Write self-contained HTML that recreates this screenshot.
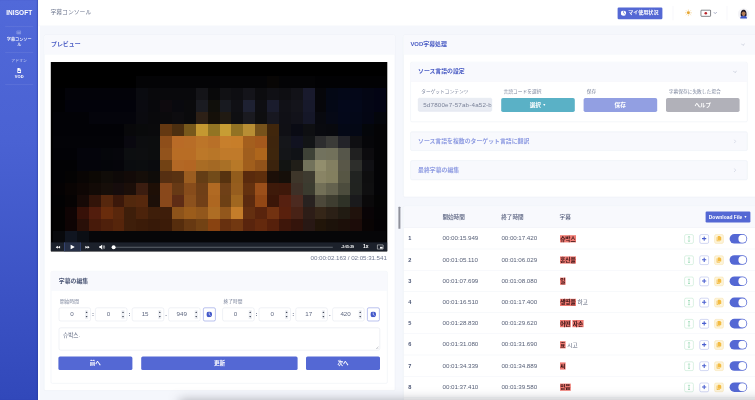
<!DOCTYPE html>
<html lang="ja">
<head>
<meta charset="utf-8">
<title>字幕コンソール</title>
<style>
*{box-sizing:border-box;margin:0;padding:0}
html,body{width:755px;height:400px;overflow:hidden;background:#f5f7fc}
body{font-family:"Liberation Sans","Noto Sans CJK JP",sans-serif;color:#4b5675}
#root{-webkit-mask-image:linear-gradient(#000,#000);mask-image:linear-gradient(#000,#000);position:absolute;left:0;top:0;width:1887.5px;height:1000px;transform:scale(.4);transform-origin:0 0;overflow:hidden;background:#f5f7fc}
.abs{position:absolute}
/* sidebar */
#side{position:absolute;left:0;top:0;width:95px;box-shadow:inset -3px 0 3px -1px rgba(35,50,140,.45),5px 0 0 #fff;height:1000px;background:linear-gradient(180deg,#5169d9 0%,#4a62d3 35%,#3b52c4 75%,#3148ba 100%);color:#fff;text-align:center}
#side .logo{position:absolute;left:0;width:96px;top:21.5px;font-weight:700;font-size:16.2px;letter-spacing:.2px;line-height:20px}
#side .sep{position:absolute;left:13px;width:70px;height:1px;background:rgba(255,255,255,.18)}
#side .t1{position:absolute;left:0;width:96px;top:94px;font-size:10.3px;font-weight:500;line-height:11.2px}
#side .t2{position:absolute;left:0;width:96px;top:145px;font-size:9.8px;line-height:14px;color:rgba(255,255,255,.62)}
#side .t3{position:absolute;left:0;width:96px;top:183.7px;font-size:10px;font-weight:700;line-height:14px}
/* topbar */
#top{position:absolute;left:96px;top:0;right:0;height:64px;background:#fff;box-shadow:0 1px 2px rgba(60,70,120,.06)}
#top .title{position:absolute;left:30px;top:21px;font-size:14.6px;line-height:21px;color:#6f7890}
#top .use{position:absolute;left:1448px;top:18.5px;width:112px;height:29px;background:#5468d4;border-radius:3px;color:#fff;font-size:12.6px;font-weight:700;line-height:27.4px;text-align:left;padding-left:26.5px;white-space:nowrap}
#top .vs{position:absolute;top:15px;width:1px;height:36px;background:#e9ecf3}
/* cards */
.card{position:absolute;background:#fff;border:1px solid #e7eaf3;border-radius:4px}
.card>.hd{position:absolute;left:0;top:0;right:0;background:#f8f9fd;border-bottom:1px solid #eceff6;border-radius:4px 4px 0 0}
.hd .tt{position:absolute;white-space:nowrap;font-weight:700}
.blue{color:#4a5cc4}
.lblue{color:#8f9ce2}
.lbl{position:absolute;font-size:11.8px;line-height:14px;color:#7c859c;white-space:nowrap}
.inp{position:absolute;height:34px;border:1px solid #d9dde9;border-radius:5px;background:#fff;font-size:15.6px;letter-spacing:-.1px;line-height:32px;color:#5f6880;text-align:center}
.inp i{position:absolute;right:9px;top:8px;width:7px;height:17px}
.sepc{position:absolute;font-size:15px;font-weight:700;color:#4b5675;line-height:34px;width:12px;text-align:center}
.clk{position:absolute;width:31px;height:34px;border:1.4px solid #5468d4;border-radius:4px;background:#fff}
.btn{position:absolute;border-radius:3px;color:#fff;text-align:center;font-weight:700;white-space:nowrap}
.pri{background:#5468d4}
svg{display:block}
.pix{position:absolute;left:0;top:0}
/* table */
.th{position:absolute;top:19px;font-size:14px;font-weight:500;color:#5a6380;line-height:14px;white-space:nowrap}
.row{position:absolute;left:0;right:0;height:53px;border-top:1px solid #eceff6}
.row span{position:absolute;top:18.6px;font-size:15.6px;letter-spacing:-.16px;line-height:16px;color:#586178;white-space:nowrap}
.row .n{top:18.4px;left:12px;font-weight:700;color:#4b5675;font-size:14px}
.row .s{left:98px}
.row .e{left:245px}
.row .k{left:391px;font-family:"Liberation Sans","Noto Sans CJK KR","NanumGothic",sans-serif;font-size:14px;letter-spacing:0;color:#5a6278;top:19.6px}
.row .k b{background:#ef7a72;color:#2e1012;font-weight:700;padding:.9px 1px}
.ic{position:absolute;top:16px;width:23px;height:23px;border-radius:4px;background:#fff}
.tg{position:absolute;left:1824px;top:15.4px;width:44px;height:23.6px;border-radius:12px;background:#5468d4}
.tg:after{content:"";position:absolute;right:2.2px;top:2px;width:19.6px;height:19.6px;border-radius:10px;background:#fff}
</style>
</head>
<body>
<div id="root">
<div id="side">
<div class="logo">INISOFT</div>
<div class="sep" style="top:65.500px"></div>
<svg class="abs" style="left:40.500px;top:76px" width="12" height="10" viewBox="0 0 12 10"><rect x=".6" y=".6" width="10.800" height="8.800" rx="1.200" fill="rgba(255,255,255,.14)" stroke="rgba(255,255,255,.5)" stroke-width="1.200"/><rect x="2.600" y="5.600" width="6.800" height="1.400" fill="rgba(255,255,255,.5)"/></svg>
<div class="t1">字幕コンソー<br>ル</div>
<div class="sep" style="top:129.500px"></div>
<div class="t2">アドオン</div>
<svg class="abs" style="left:43px;top:169.5px" width="10" height="13" viewBox="0 0 10 13"><path d="M1.5 0h4.8L10 3.7V11.5A1.5 1.5 0 0 1 8.5 13h-7A1.5 1.5 0 0 1 0 11.500V1.5A1.5 1.5 0 0 1 1.5 0z" fill="#fff"/><path d="M6 .4V4h3.6z" fill="#4c64d5"/><rect x="2.2" y="6.6" width="5.6" height="3.6" rx=".6" fill="#4c64d5"/></svg>
<div class="t3">VOD</div>
<div class="sep" style="top:211px"></div>
</div>
<div id="top">
<div class="title">字幕コンソール</div>
<div class="use"><svg class="abs" style="left:8px;top:7.800px" width="13.400" height="13.400" viewBox="0 0 13 13"><circle cx="6.500" cy="6.500" r="6.500" fill="#fff"/><path d="M6.800 6.300V0M6.800 6.300L11.800 10" stroke="#5468d4" stroke-width="1.500" fill="none"/></svg>マイ使用状況</div>
<div class="vs" style="left:1585.5px"></div>
<svg class="abs" style="left:1616px;top:23px" width="18" height="18" viewBox="0 0 18 18"><circle cx="9" cy="9" r="3.700" fill="#e6a632"/><g stroke="#f0c068" stroke-width="1.400" stroke-linecap="round"><path d="M9 1.500v1.800M9 14.700v1.800M1.500 9h1.800M14.700 9h1.800M3.700 3.700l1.300 1.300M13 13l1.300 1.300M3.700 14.300l1.300-1.300M13 5l1.300-1.300"/></g></svg>
<svg class="abs" style="left:1655px;top:23.500px" width="27" height="18" viewBox="0 0 27 18"><rect x="1.100" y="1.100" width="24.800" height="15.800" rx="2" fill="#fff" stroke="#4c4e55" stroke-width="2.200"/><circle cx="13.500" cy="9" r="3.200" fill="#b9242a"/></svg>
<svg class="abs" style="left:1687px;top:29px" width="10" height="7" viewBox="0 0 10 7"><path d="M1 1l4 4.200L9 1" fill="none" stroke="#8e95b5" stroke-width="1.800"/></svg>
<div class="vs" style="left:1721px"></div>
<svg class="abs" style="left:1748px;top:20px" width="30" height="30" viewBox="0 0 30 30"><circle cx="15" cy="15" r="14.500" fill="#f4f4f7"/><path d="M8 20c-1.500-9 1.500-15.500 7-15.500S23.500 11 22 20z" fill="#241c28"/><ellipse cx="15" cy="13" rx="4.700" ry="5.500" fill="#b37c56"/><path d="M10 11c.8-3.800 3-4.500 5-4.500s4.200.7 5 4.500c-2-.4-3.500-1.500-4.400-2.800C14.500 9.800 12.500 10.700 10 11z" fill="#241c28"/><path d="M6.500 26.500c0-5.500 3-8 8.500-8s8.500 2.500 8.500 8z" fill="#3d56c4"/><path d="M12.800 17.500h4.400v2l-2.200 1.600-2.200-1.600z" fill="#b37c56"/></svg>
</div>
<div class="card" style="left:110px;top:86.500px;width:877.500px;height:890.500px">
<div class="hd" style="height:48.500px"><div class="tt blue" style="left:16.500px;top:13.500px;font-size:14.800px;line-height:21px">プレビュー</div></div>
<div class="abs" style="left:15.500px;top:67.500px;width:841.800px;height:472.800px;background:#000;overflow:hidden"><svg class="pix" width="842.5" height="475" viewBox="0 0 842.5 475" shape-rendering="crispEdges">
<rect width="842.5" height="475" fill="#000"/>
<rect x="213.9" y="36.0" width="208.2" height="30.0" fill="#040406"/>
<rect x="421.8" y="36.0" width="119.1" height="30.0" fill="#040406"/>
<rect x="540.6" y="36.0" width="30.0" height="30.0" fill="#080605"/>
<rect x="570.3" y="36.0" width="89.4" height="30.0" fill="#040406"/>
<rect x="659.4" y="36.0" width="178.5" height="30.0" fill="#020204"/>
<rect x="6.0" y="65.7" width="30.0" height="30.0" fill="#000002"/>
<rect x="35.7" y="65.7" width="178.5" height="30.0" fill="#030309"/>
<rect x="213.9" y="65.7" width="30.0" height="30.0" fill="#0a0b10"/>
<rect x="243.6" y="65.7" width="119.1" height="30.0" fill="#09090c"/>
<rect x="362.4" y="65.7" width="30.0" height="30.0" fill="#141418"/>
<rect x="392.1" y="65.7" width="30.0" height="30.0" fill="#09090a"/>
<rect x="421.8" y="65.7" width="30.0" height="30.0" fill="#111114"/>
<rect x="451.5" y="65.7" width="30.0" height="30.0" fill="#0e0e12"/>
<rect x="481.2" y="65.7" width="30.0" height="30.0" fill="#14141a"/>
<rect x="510.9" y="65.7" width="30.0" height="30.0" fill="#0c0c0f"/>
<rect x="540.6" y="65.7" width="30.0" height="30.0" fill="#101015"/>
<rect x="570.3" y="65.7" width="30.0" height="30.0" fill="#0e0e12"/>
<rect x="600.0" y="65.7" width="30.0" height="30.0" fill="#121218"/>
<rect x="629.7" y="65.7" width="30.0" height="30.0" fill="#191a2d"/>
<rect x="659.4" y="65.7" width="30.0" height="30.0" fill="#06060a"/>
<rect x="689.1" y="65.7" width="30.0" height="30.0" fill="#040815"/>
<rect x="718.8" y="65.7" width="30.0" height="30.0" fill="#040818"/>
<rect x="748.5" y="65.7" width="30.0" height="30.0" fill="#040718"/>
<rect x="778.2" y="65.7" width="30.0" height="30.0" fill="#040614"/>
<rect x="807.9" y="65.7" width="30.0" height="30.0" fill="#030414"/>
<rect x="6.0" y="95.3" width="30.0" height="30.0" fill="#010103"/>
<rect x="35.7" y="95.3" width="178.5" height="30.0" fill="#02020a"/>
<rect x="213.9" y="95.3" width="30.0" height="30.0" fill="#0a0a10"/>
<rect x="243.6" y="95.3" width="30.0" height="30.0" fill="#08080c"/>
<rect x="273.3" y="95.3" width="30.0" height="30.0" fill="#0e0a0e"/>
<rect x="303.0" y="95.3" width="30.0" height="30.0" fill="#09090e"/>
<rect x="332.7" y="95.3" width="30.0" height="30.0" fill="#0a0a0c"/>
<rect x="362.4" y="95.3" width="30.0" height="30.0" fill="#1a1b21"/>
<rect x="392.1" y="95.3" width="30.0" height="30.0" fill="#100f0b"/>
<rect x="421.8" y="95.3" width="30.0" height="30.0" fill="#181a20"/>
<rect x="451.5" y="95.3" width="30.0" height="30.0" fill="#101015"/>
<rect x="481.2" y="95.3" width="30.0" height="30.0" fill="#1e2132"/>
<rect x="510.9" y="95.3" width="30.0" height="30.0" fill="#0e0e12"/>
<rect x="540.6" y="95.3" width="30.0" height="30.0" fill="#1a1c2d"/>
<rect x="570.3" y="95.3" width="30.0" height="30.0" fill="#111117"/>
<rect x="600.0" y="95.3" width="30.0" height="30.0" fill="#14141b"/>
<rect x="629.7" y="95.3" width="30.0" height="30.0" fill="#17192b"/>
<rect x="659.4" y="95.3" width="30.0" height="30.0" fill="#06060a"/>
<rect x="689.1" y="95.3" width="30.0" height="30.0" fill="#040816"/>
<rect x="718.8" y="95.3" width="30.0" height="30.0" fill="#04081b"/>
<rect x="748.5" y="95.3" width="30.0" height="30.0" fill="#04081a"/>
<rect x="778.2" y="95.3" width="30.0" height="30.0" fill="#040615"/>
<rect x="807.9" y="95.3" width="30.0" height="30.0" fill="#030414"/>
<rect x="6.0" y="125.0" width="89.4" height="30.0" fill="#020206"/>
<rect x="95.1" y="125.0" width="119.1" height="30.0" fill="#04040b"/>
<rect x="213.9" y="125.0" width="30.0" height="30.0" fill="#0a0a0f"/>
<rect x="243.6" y="125.0" width="30.0" height="30.0" fill="#09090c"/>
<rect x="273.3" y="125.0" width="30.0" height="30.0" fill="#0b0a0c"/>
<rect x="303.0" y="125.0" width="30.0" height="30.0" fill="#0d0c0f"/>
<rect x="332.7" y="125.0" width="30.0" height="30.0" fill="#0a0a0c"/>
<rect x="362.4" y="125.0" width="30.0" height="30.0" fill="#2d2016"/>
<rect x="392.1" y="125.0" width="30.0" height="30.0" fill="#151009"/>
<rect x="421.8" y="125.0" width="30.0" height="30.0" fill="#201a12"/>
<rect x="451.5" y="125.0" width="30.0" height="30.0" fill="#0f0f12"/>
<rect x="481.2" y="125.0" width="30.0" height="30.0" fill="#1a1a20"/>
<rect x="510.9" y="125.0" width="30.0" height="30.0" fill="#0e0e10"/>
<rect x="540.6" y="125.0" width="30.0" height="30.0" fill="#171720"/>
<rect x="570.3" y="125.0" width="30.0" height="30.0" fill="#101016"/>
<rect x="600.0" y="125.0" width="30.0" height="30.0" fill="#12121a"/>
<rect x="629.7" y="125.0" width="30.0" height="30.0" fill="#151728"/>
<rect x="659.4" y="125.0" width="30.0" height="30.0" fill="#08090f"/>
<rect x="689.1" y="125.0" width="30.0" height="30.0" fill="#060916"/>
<rect x="718.8" y="125.0" width="30.0" height="30.0" fill="#04081a"/>
<rect x="748.5" y="125.0" width="30.0" height="30.0" fill="#040818"/>
<rect x="778.2" y="125.0" width="30.0" height="30.0" fill="#040614"/>
<rect x="807.9" y="125.0" width="30.0" height="30.0" fill="#04060c"/>
<rect x="6.0" y="154.8" width="178.5" height="30.0" fill="#020206"/>
<rect x="184.2" y="154.8" width="30.0" height="30.0" fill="#08080a"/>
<rect x="213.9" y="154.8" width="30.0" height="30.0" fill="#090a0b"/>
<rect x="243.6" y="154.8" width="30.0" height="30.0" fill="#0a0a0c"/>
<rect x="273.3" y="154.8" width="30.0" height="30.0" fill="#643811"/>
<rect x="303.0" y="154.8" width="30.0" height="30.0" fill="#4c2f10"/>
<rect x="332.7" y="154.8" width="30.0" height="30.0" fill="#77581b"/>
<rect x="362.4" y="154.8" width="30.0" height="30.0" fill="#c49831"/>
<rect x="392.1" y="154.8" width="30.0" height="30.0" fill="#927423"/>
<rect x="421.8" y="154.8" width="30.0" height="30.0" fill="#c79d34"/>
<rect x="451.5" y="154.8" width="30.0" height="30.0" fill="#927223"/>
<rect x="481.2" y="154.8" width="30.0" height="30.0" fill="#b88e34"/>
<rect x="510.9" y="154.8" width="30.0" height="30.0" fill="#76521b"/>
<rect x="540.6" y="154.8" width="30.0" height="30.0" fill="#40260c"/>
<rect x="570.3" y="154.8" width="30.0" height="30.0" fill="#101015"/>
<rect x="600.0" y="154.8" width="30.0" height="30.0" fill="#0a0b14"/>
<rect x="629.7" y="154.8" width="30.0" height="30.0" fill="#0e0f12"/>
<rect x="659.4" y="154.8" width="30.0" height="30.0" fill="#090a0f"/>
<rect x="689.1" y="154.8" width="30.0" height="30.0" fill="#08090e"/>
<rect x="718.8" y="154.8" width="30.0" height="30.0" fill="#040816"/>
<rect x="748.5" y="154.8" width="30.0" height="30.0" fill="#040815"/>
<rect x="778.2" y="154.8" width="30.0" height="30.0" fill="#04060a"/>
<rect x="807.9" y="154.8" width="30.0" height="30.0" fill="#040406"/>
<rect x="6.0" y="184.4" width="178.5" height="30.0" fill="#030307"/>
<rect x="184.2" y="184.4" width="30.0" height="30.0" fill="#09080f"/>
<rect x="213.9" y="184.4" width="30.0" height="30.0" fill="#0c0d0f"/>
<rect x="243.6" y="184.4" width="30.0" height="30.0" fill="#0c0d0e"/>
<rect x="273.3" y="184.4" width="30.0" height="30.0" fill="#8e4e1a"/>
<rect x="303.0" y="184.4" width="30.0" height="30.0" fill="#b96b27"/>
<rect x="332.7" y="184.4" width="30.0" height="30.0" fill="#b86d27"/>
<rect x="362.4" y="184.4" width="30.0" height="30.0" fill="#bc7529"/>
<rect x="392.1" y="184.4" width="30.0" height="30.0" fill="#b87028"/>
<rect x="421.8" y="184.4" width="30.0" height="30.0" fill="#c77f2c"/>
<rect x="451.5" y="184.4" width="30.0" height="30.0" fill="#c77e2a"/>
<rect x="481.2" y="184.4" width="30.0" height="30.0" fill="#a45f1e"/>
<rect x="510.9" y="184.4" width="30.0" height="30.0" fill="#a4591d"/>
<rect x="540.6" y="184.4" width="30.0" height="30.0" fill="#3e250d"/>
<rect x="570.3" y="184.4" width="30.0" height="30.0" fill="#15161a"/>
<rect x="600.0" y="184.4" width="30.0" height="30.0" fill="#111220"/>
<rect x="629.7" y="184.4" width="30.0" height="30.0" fill="#121416"/>
<rect x="659.4" y="184.4" width="30.0" height="30.0" fill="#2d2d2e"/>
<rect x="689.1" y="184.4" width="30.0" height="30.0" fill="#3b3b38"/>
<rect x="718.8" y="184.4" width="30.0" height="30.0" fill="#232329"/>
<rect x="748.5" y="184.4" width="30.0" height="30.0" fill="#0f0f12"/>
<rect x="778.2" y="184.4" width="30.0" height="30.0" fill="#060609"/>
<rect x="807.9" y="184.4" width="30.0" height="30.0" fill="#040406"/>
<rect x="6.0" y="214.2" width="59.7" height="30.0" fill="#020206"/>
<rect x="65.4" y="214.2" width="59.7" height="30.0" fill="#04040b"/>
<rect x="124.8" y="214.2" width="30.0" height="30.0" fill="#05060a"/>
<rect x="154.5" y="214.2" width="30.0" height="30.0" fill="#06060b"/>
<rect x="184.2" y="214.2" width="30.0" height="30.0" fill="#0c0e10"/>
<rect x="213.9" y="214.2" width="30.0" height="30.0" fill="#0d0e10"/>
<rect x="243.6" y="214.2" width="30.0" height="30.0" fill="#0c0d0e"/>
<rect x="273.3" y="214.2" width="30.0" height="30.0" fill="#92531c"/>
<rect x="303.0" y="214.2" width="59.7" height="30.0" fill="#b86d25"/>
<rect x="362.4" y="214.2" width="30.0" height="30.0" fill="#bc7829"/>
<rect x="392.1" y="214.2" width="30.0" height="30.0" fill="#b87628"/>
<rect x="421.8" y="214.2" width="59.7" height="30.0" fill="#c07a2a"/>
<rect x="481.2" y="214.2" width="30.0" height="30.0" fill="#a05e1e"/>
<rect x="510.9" y="214.2" width="30.0" height="30.0" fill="#ae661c"/>
<rect x="540.6" y="214.2" width="30.0" height="30.0" fill="#3e260d"/>
<rect x="570.3" y="214.2" width="30.0" height="30.0" fill="#141518"/>
<rect x="600.0" y="214.2" width="30.0" height="30.0" fill="#101216"/>
<rect x="629.7" y="214.2" width="30.0" height="30.0" fill="#3e4237"/>
<rect x="659.4" y="214.2" width="30.0" height="30.0" fill="#72725e"/>
<rect x="689.1" y="214.2" width="30.0" height="30.0" fill="#72715b"/>
<rect x="718.8" y="214.2" width="30.0" height="30.0" fill="#56564a"/>
<rect x="748.5" y="214.2" width="30.0" height="30.0" fill="#202020"/>
<rect x="778.2" y="214.2" width="30.0" height="30.0" fill="#0c0b0e"/>
<rect x="807.9" y="214.2" width="30.0" height="30.0" fill="#040406"/>
<rect x="6.0" y="243.8" width="59.7" height="30.0" fill="#020204"/>
<rect x="65.4" y="243.8" width="59.7" height="30.0" fill="#04040a"/>
<rect x="124.8" y="243.8" width="30.0" height="30.0" fill="#040509"/>
<rect x="154.5" y="243.8" width="30.0" height="30.0" fill="#05050a"/>
<rect x="184.2" y="243.8" width="30.0" height="30.0" fill="#0a0c0f"/>
<rect x="213.9" y="243.8" width="30.0" height="30.0" fill="#0b0d0f"/>
<rect x="243.6" y="243.8" width="30.0" height="30.0" fill="#0a0b0e"/>
<rect x="273.3" y="243.8" width="30.0" height="30.0" fill="#724214"/>
<rect x="303.0" y="243.8" width="30.0" height="30.0" fill="#b36825"/>
<rect x="332.7" y="243.8" width="30.0" height="30.0" fill="#b36623"/>
<rect x="362.4" y="243.8" width="30.0" height="30.0" fill="#a96c24"/>
<rect x="392.1" y="243.8" width="30.0" height="30.0" fill="#a46924"/>
<rect x="421.8" y="243.8" width="30.0" height="30.0" fill="#a97026"/>
<rect x="451.5" y="243.8" width="30.0" height="30.0" fill="#b87928"/>
<rect x="481.2" y="243.8" width="30.0" height="30.0" fill="#a05e1c"/>
<rect x="510.9" y="243.8" width="30.0" height="30.0" fill="#92531a"/>
<rect x="540.6" y="243.8" width="30.0" height="30.0" fill="#3b230d"/>
<rect x="570.3" y="243.8" width="30.0" height="30.0" fill="#121412"/>
<rect x="600.0" y="243.8" width="30.0" height="30.0" fill="#201e18"/>
<rect x="629.7" y="243.8" width="30.0" height="30.0" fill="#72725b"/>
<rect x="659.4" y="243.8" width="30.0" height="30.0" fill="#928e6d"/>
<rect x="689.1" y="243.8" width="30.0" height="30.0" fill="#837f61"/>
<rect x="718.8" y="243.8" width="30.0" height="30.0" fill="#595748"/>
<rect x="748.5" y="243.8" width="30.0" height="30.0" fill="#2d2e2b"/>
<rect x="778.2" y="243.8" width="30.0" height="30.0" fill="#101014"/>
<rect x="807.9" y="243.8" width="30.0" height="30.0" fill="#040406"/>
<rect x="6.0" y="273.6" width="30.0" height="30.0" fill="#020204"/>
<rect x="35.7" y="273.6" width="30.0" height="30.0" fill="#040303"/>
<rect x="65.4" y="273.6" width="30.0" height="30.0" fill="#090504"/>
<rect x="95.1" y="273.6" width="30.0" height="30.0" fill="#0c0804"/>
<rect x="124.8" y="273.6" width="30.0" height="30.0" fill="#100c08"/>
<rect x="154.5" y="273.6" width="30.0" height="30.0" fill="#0e0908"/>
<rect x="184.2" y="273.6" width="30.0" height="30.0" fill="#120a08"/>
<rect x="213.9" y="273.6" width="30.0" height="30.0" fill="#150e09"/>
<rect x="243.6" y="273.6" width="30.0" height="30.0" fill="#0f0c09"/>
<rect x="273.3" y="273.6" width="30.0" height="30.0" fill="#562f12"/>
<rect x="303.0" y="273.6" width="30.0" height="30.0" fill="#593212"/>
<rect x="332.7" y="273.6" width="30.0" height="30.0" fill="#9b5d20"/>
<rect x="362.4" y="273.6" width="30.0" height="30.0" fill="#643d15"/>
<rect x="392.1" y="273.6" width="30.0" height="30.0" fill="#724b19"/>
<rect x="421.8" y="273.6" width="30.0" height="30.0" fill="#56320f"/>
<rect x="451.5" y="273.6" width="30.0" height="30.0" fill="#925c1c"/>
<rect x="481.2" y="273.6" width="30.0" height="30.0" fill="#592a0d"/>
<rect x="510.9" y="273.6" width="30.0" height="30.0" fill="#5e2e0c"/>
<rect x="540.6" y="273.6" width="30.0" height="30.0" fill="#1c0f08"/>
<rect x="570.3" y="273.6" width="30.0" height="30.0" fill="#150f09"/>
<rect x="600.0" y="273.6" width="30.0" height="30.0" fill="#3e362a"/>
<rect x="629.7" y="273.6" width="30.0" height="30.0" fill="#3e3b30"/>
<rect x="659.4" y="273.6" width="30.0" height="30.0" fill="#898465"/>
<rect x="689.1" y="273.6" width="30.0" height="30.0" fill="#837f5f"/>
<rect x="718.8" y="273.6" width="30.0" height="30.0" fill="#575644"/>
<rect x="748.5" y="273.6" width="30.0" height="30.0" fill="#212321"/>
<rect x="778.2" y="273.6" width="30.0" height="30.0" fill="#0e0e0f"/>
<rect x="807.9" y="273.6" width="30.0" height="30.0" fill="#040406"/>
<rect x="6.0" y="303.2" width="30.0" height="30.0" fill="#040203"/>
<rect x="35.7" y="303.2" width="30.0" height="30.0" fill="#090403"/>
<rect x="65.4" y="303.2" width="30.0" height="30.0" fill="#0e0604"/>
<rect x="95.1" y="303.2" width="30.0" height="30.0" fill="#120a06"/>
<rect x="124.8" y="303.2" width="30.0" height="30.0" fill="#160e09"/>
<rect x="154.5" y="303.2" width="30.0" height="30.0" fill="#160c0c"/>
<rect x="184.2" y="303.2" width="30.0" height="30.0" fill="#1b0e09"/>
<rect x="213.9" y="303.2" width="30.0" height="30.0" fill="#3b1d10"/>
<rect x="243.6" y="303.2" width="30.0" height="30.0" fill="#1e0f06"/>
<rect x="273.3" y="303.2" width="30.0" height="30.0" fill="#89481b"/>
<rect x="303.0" y="303.2" width="30.0" height="30.0" fill="#673915"/>
<rect x="332.7" y="303.2" width="30.0" height="30.0" fill="#874c1b"/>
<rect x="362.4" y="303.2" width="30.0" height="30.0" fill="#6f3f17"/>
<rect x="392.1" y="303.2" width="30.0" height="30.0" fill="#b16a23"/>
<rect x="421.8" y="303.2" width="30.0" height="30.0" fill="#6f4017"/>
<rect x="451.5" y="303.2" width="30.0" height="30.0" fill="#965d1e"/>
<rect x="481.2" y="303.2" width="30.0" height="30.0" fill="#64310f"/>
<rect x="510.9" y="303.2" width="30.0" height="30.0" fill="#9b4f1a"/>
<rect x="540.6" y="303.2" width="30.0" height="30.0" fill="#3e1a0a"/>
<rect x="570.3" y="303.2" width="30.0" height="30.0" fill="#3e180a"/>
<rect x="600.0" y="303.2" width="30.0" height="30.0" fill="#3e3027"/>
<rect x="629.7" y="303.2" width="30.0" height="30.0" fill="#3b3b2f"/>
<rect x="659.4" y="303.2" width="30.0" height="30.0" fill="#726f57"/>
<rect x="689.1" y="303.2" width="30.0" height="30.0" fill="#64624e"/>
<rect x="718.8" y="303.2" width="30.0" height="30.0" fill="#4c4c3d"/>
<rect x="748.5" y="303.2" width="30.0" height="30.0" fill="#212320"/>
<rect x="778.2" y="303.2" width="30.0" height="30.0" fill="#0f0f10"/>
<rect x="807.9" y="303.2" width="30.0" height="30.0" fill="#040406"/>
<rect x="6.0" y="332.9" width="30.0" height="30.0" fill="#020203"/>
<rect x="35.7" y="332.9" width="30.0" height="30.0" fill="#060303"/>
<rect x="65.4" y="332.9" width="30.0" height="30.0" fill="#160906"/>
<rect x="95.1" y="332.9" width="30.0" height="30.0" fill="#321409"/>
<rect x="124.8" y="332.9" width="30.0" height="30.0" fill="#56270d"/>
<rect x="154.5" y="332.9" width="30.0" height="30.0" fill="#3b180a"/>
<rect x="184.2" y="332.9" width="30.0" height="30.0" fill="#52280d"/>
<rect x="213.9" y="332.9" width="30.0" height="30.0" fill="#56280d"/>
<rect x="243.6" y="332.9" width="30.0" height="30.0" fill="#1c0f08"/>
<rect x="273.3" y="332.9" width="30.0" height="30.0" fill="#89481b"/>
<rect x="303.0" y="332.9" width="30.0" height="30.0" fill="#5e2c15"/>
<rect x="332.7" y="332.9" width="30.0" height="30.0" fill="#8c511d"/>
<rect x="362.4" y="332.9" width="30.0" height="30.0" fill="#713f17"/>
<rect x="392.1" y="332.9" width="30.0" height="30.0" fill="#ae6721"/>
<rect x="421.8" y="332.9" width="30.0" height="30.0" fill="#6d4015"/>
<rect x="451.5" y="332.9" width="30.0" height="30.0" fill="#a06720"/>
<rect x="481.2" y="332.9" width="30.0" height="30.0" fill="#5b2a0f"/>
<rect x="510.9" y="332.9" width="30.0" height="30.0" fill="#924715"/>
<rect x="540.6" y="332.9" width="30.0" height="30.0" fill="#3b1608"/>
<rect x="570.3" y="332.9" width="30.0" height="30.0" fill="#562010"/>
<rect x="600.0" y="332.9" width="30.0" height="30.0" fill="#4c2a20"/>
<rect x="629.7" y="332.9" width="30.0" height="30.0" fill="#282220"/>
<rect x="659.4" y="332.9" width="30.0" height="30.0" fill="#4c483a"/>
<rect x="689.1" y="332.9" width="30.0" height="30.0" fill="#3e3d30"/>
<rect x="718.8" y="332.9" width="30.0" height="30.0" fill="#2f3227"/>
<rect x="748.5" y="332.9" width="30.0" height="30.0" fill="#1a1a1c"/>
<rect x="778.2" y="332.9" width="30.0" height="30.0" fill="#0a090a"/>
<rect x="807.9" y="332.9" width="30.0" height="30.0" fill="#040404"/>
<rect x="6.0" y="362.6" width="30.0" height="30.0" fill="#030202"/>
<rect x="35.7" y="362.6" width="30.0" height="30.0" fill="#0f0404"/>
<rect x="65.4" y="362.6" width="30.0" height="30.0" fill="#371108"/>
<rect x="95.1" y="362.6" width="30.0" height="30.0" fill="#521d0d"/>
<rect x="124.8" y="362.6" width="30.0" height="30.0" fill="#692c0c"/>
<rect x="154.5" y="362.6" width="30.0" height="30.0" fill="#59270c"/>
<rect x="184.2" y="362.6" width="30.0" height="30.0" fill="#3e1e0a"/>
<rect x="213.9" y="362.6" width="30.0" height="30.0" fill="#4c230b"/>
<rect x="243.6" y="362.6" width="30.0" height="30.0" fill="#3e1e0a"/>
<rect x="273.3" y="362.6" width="30.0" height="30.0" fill="#3e1d0a"/>
<rect x="303.0" y="362.6" width="30.0" height="30.0" fill="#8d531a"/>
<rect x="332.7" y="362.6" width="30.0" height="30.0" fill="#9b5c1b"/>
<rect x="362.4" y="362.6" width="30.0" height="30.0" fill="#92571c"/>
<rect x="392.1" y="362.6" width="30.0" height="30.0" fill="#ae6d24"/>
<rect x="421.8" y="362.6" width="30.0" height="30.0" fill="#92571c"/>
<rect x="451.5" y="362.6" width="30.0" height="30.0" fill="#c47d2a"/>
<rect x="481.2" y="362.6" width="30.0" height="30.0" fill="#642f10"/>
<rect x="510.9" y="362.6" width="30.0" height="30.0" fill="#59240d"/>
<rect x="540.6" y="362.6" width="30.0" height="30.0" fill="#723211"/>
<rect x="570.3" y="362.6" width="30.0" height="30.0" fill="#59200d"/>
<rect x="600.0" y="362.6" width="30.0" height="30.0" fill="#482216"/>
<rect x="629.7" y="362.6" width="30.0" height="30.0" fill="#2d1d17"/>
<rect x="659.4" y="362.6" width="30.0" height="30.0" fill="#352618"/>
<rect x="689.1" y="362.6" width="30.0" height="30.0" fill="#2b2016"/>
<rect x="718.8" y="362.6" width="30.0" height="30.0" fill="#211b12"/>
<rect x="748.5" y="362.6" width="30.0" height="30.0" fill="#20120c"/>
<rect x="778.2" y="362.6" width="30.0" height="30.0" fill="#090406"/>
<rect x="807.9" y="362.6" width="30.0" height="30.0" fill="#040304"/>
<rect x="6.0" y="392.3" width="30.0" height="30.0" fill="#030202"/>
<rect x="35.7" y="392.3" width="30.0" height="30.0" fill="#0e0404"/>
<rect x="65.4" y="392.3" width="30.0" height="30.0" fill="#290f08"/>
<rect x="95.1" y="392.3" width="30.0" height="30.0" fill="#471a0a"/>
<rect x="124.8" y="392.3" width="30.0" height="30.0" fill="#4f200b"/>
<rect x="154.5" y="392.3" width="30.0" height="30.0" fill="#56250b"/>
<rect x="184.2" y="392.3" width="30.0" height="30.0" fill="#3e1e0a"/>
<rect x="213.9" y="392.3" width="30.0" height="30.0" fill="#3b1b08"/>
<rect x="243.6" y="392.3" width="30.0" height="30.0" fill="#371908"/>
<rect x="273.3" y="392.3" width="30.0" height="30.0" fill="#3b1b08"/>
<rect x="303.0" y="392.3" width="30.0" height="30.0" fill="#562d0d"/>
<rect x="332.7" y="392.3" width="30.0" height="30.0" fill="#673912"/>
<rect x="362.4" y="392.3" width="30.0" height="30.0" fill="#724214"/>
<rect x="392.1" y="392.3" width="30.0" height="30.0" fill="#894311"/>
<rect x="421.8" y="392.3" width="30.0" height="30.0" fill="#67300f"/>
<rect x="451.5" y="392.3" width="30.0" height="30.0" fill="#723811"/>
<rect x="481.2" y="392.3" width="30.0" height="30.0" fill="#59240d"/>
<rect x="510.9" y="392.3" width="30.0" height="30.0" fill="#64290d"/>
<rect x="540.6" y="392.3" width="30.0" height="30.0" fill="#56200b"/>
<rect x="570.3" y="392.3" width="30.0" height="30.0" fill="#3e160a"/>
<rect x="600.0" y="392.3" width="30.0" height="30.0" fill="#34140b"/>
<rect x="629.7" y="392.3" width="30.0" height="30.0" fill="#281814"/>
<rect x="659.4" y="392.3" width="30.0" height="30.0" fill="#211509"/>
<rect x="689.1" y="392.3" width="30.0" height="30.0" fill="#1c120a"/>
<rect x="718.8" y="392.3" width="30.0" height="30.0" fill="#1c0f09"/>
<rect x="748.5" y="392.3" width="30.0" height="30.0" fill="#1c0c09"/>
<rect x="778.2" y="392.3" width="30.0" height="30.0" fill="#090404"/>
<rect x="807.9" y="392.3" width="30.0" height="30.0" fill="#040204"/>
<rect x="6.0" y="422.1" width="30.0" height="30.0" fill="#08090c"/>
<rect x="35.7" y="422.1" width="30.0" height="30.0" fill="#101520"/>
<rect x="65.4" y="422.1" width="30.0" height="30.0" fill="#0b0e14"/>
<rect x="95.1" y="422.1" width="30.0" height="30.0" fill="#060609"/>
<rect x="124.8" y="422.1" width="713.1" height="30.0" fill="#060608"/>
</svg>
<div class="abs" style="left:0;top:451px;width:842.5px;height:25px;background:#1c212b"></div>
<div class="abs" style="left:33px;top:451px;width:41px;height:25px;background:#262f46;border-left:1.500px solid #4a63ae;border-right:1.500px solid #4a63ae"></div>
<svg class="abs" style="left:12.500px;top:458.600px" width="11.500" height="8.500" viewBox="0 0 14 10"><path d="M7 .5v9L0 5zM14 .5v9L7 5z" fill="#fff"/></svg>
<svg class="abs" style="left:49px;top:456.200px" width="11" height="13" viewBox="0 0 11 13"><path d="M0 0l11 6.500L0 13z" fill="#fff"/></svg>
<svg class="abs" style="left:86px;top:458.600px" width="11.500" height="8.500" viewBox="0 0 14 10"><path d="M0 .5v9L7 5zM7 .5v9L14 5z" fill="#fff"/></svg>
<svg class="abs" style="left:121px;top:456.200px" width="16" height="13.500" viewBox="0 0 19 16"><path d="M0 5h4l5-4.500v15L4 11H0z" fill="#fff"/><path d="M11.500 4.500a4.500 4.500 0 0 1 0 7M13.500 2a8 8 0 0 1 0 12" fill="none" stroke="#fff" stroke-width="1.600"/></svg>
<div class="abs" style="left:157px;top:461.700px;width:548px;height:2px;background:#6d727b"></div>
<div class="abs" style="left:152px;top:457.700px;width:10px;height:10px;border-radius:5px;background:#fff"></div>
<div class="abs" style="left:726px;top:456px;font-size:8.600px;font-weight:700;line-height:12px;color:#fff;white-space:nowrap">-2:05:29</div>
<div class="abs" style="left:781px;top:454.500px;font-size:12.500px;font-weight:700;line-height:15px;color:#fff;white-space:nowrap">1x</div>
<svg class="abs" style="left:815px;top:455.500px" width="17" height="13" viewBox="0 0 17 13"><rect x=".9" y=".9" width="15.200" height="11.200" rx="1" fill="none" stroke="#fff" stroke-width="1.800"/><rect x="8" y="6" width="6.500" height="4.500" fill="#fff"/></svg></div>
<div class="abs" style="right:19.500px;top:547px;font-size:15.6px;letter-spacing:-.17px;line-height:20px;color:#6f7890;white-space:nowrap">00:00:02.163 / 02:05:31.541</div>
<div class="card" style="left:16px;top:590.500px;width:842px;height:281px">
<div class="hd" style="height:47.500px"><div class="tt" style="left:19px;top:13.500px;font-size:14.7px;line-height:20px;color:#4b5675">字幕の編集</div></div>
<div class="lbl" style="left:22px;top:67.5px">開始時間</div>
<div class="lbl" style="left:431px;top:67.5px">終了時間</div>
<div class="inp" style="left:18.5px;top:90px;width:80px"><span class="abs" style="left:0;width:64.6px;text-align:center">0</span><svg class="abs" style="right:5px;top:4.500px" width="9" height="23" viewBox="0 0 9 23"><rect width="9" height="23" rx="2.500" fill="#eef0f4"/><path d="M2 7.800l2.500-3.800L7 7.800zM2 15.200l2.500 3.800L7 15.200z" fill="#3c4252"/></svg></div>
<div class="inp" style="left:110px;top:90px;width:80px"><span class="abs" style="left:0;width:64.6px;text-align:center">0</span><svg class="abs" style="right:5px;top:4.500px" width="9" height="23" viewBox="0 0 9 23"><rect width="9" height="23" rx="2.500" fill="#eef0f4"/><path d="M2 7.800l2.500-3.800L7 7.800zM2 15.200l2.500 3.800L7 15.200z" fill="#3c4252"/></svg></div>
<div class="inp" style="left:201.5px;top:90px;width:80px"><span class="abs" style="left:0;width:64.6px;text-align:center">15</span><svg class="abs" style="right:5px;top:4.500px" width="9" height="23" viewBox="0 0 9 23"><rect width="9" height="23" rx="2.500" fill="#eef0f4"/><path d="M2 7.800l2.500-3.800L7 7.800zM2 15.200l2.500 3.800L7 15.200z" fill="#3c4252"/></svg></div>
<div class="inp" style="left:293px;top:90px;width:80px"><span class="abs" style="left:0;width:64.6px;text-align:center">949</span><svg class="abs" style="right:5px;top:4.500px" width="9" height="23" viewBox="0 0 9 23"><rect width="9" height="23" rx="2.500" fill="#eef0f4"/><path d="M2 7.800l2.500-3.800L7 7.800zM2 15.200l2.500 3.800L7 15.200z" fill="#3c4252"/></svg></div>
<div class="sepc" style="left:98.5px;top:90px">:</div>
<div class="sepc" style="left:190px;top:90px">:</div>
<div class="sepc" style="left:281.5px;top:90px">.</div>
<div class="clk" style="left:380px;top:90px"><svg class="abs" style="left:7.300px;top:8.800px" width="14" height="14" viewBox="0 0 13 13"><circle cx="6.500" cy="6.500" r="6.500" fill="#4257c9"/><path d="M6.500 3v3.800l2.400 1.500" fill="none" stroke="#fff" stroke-width="1.500" stroke-linecap="round"/></svg></div>
<div class="inp" style="left:427.5px;top:90px;width:80px"><span class="abs" style="left:0;width:64.6px;text-align:center">0</span><svg class="abs" style="right:5px;top:4.500px" width="9" height="23" viewBox="0 0 9 23"><rect width="9" height="23" rx="2.500" fill="#eef0f4"/><path d="M2 7.800l2.500-3.800L7 7.800zM2 15.200l2.500 3.800L7 15.200z" fill="#3c4252"/></svg></div>
<div class="inp" style="left:519px;top:90px;width:80px"><span class="abs" style="left:0;width:64.6px;text-align:center">0</span><svg class="abs" style="right:5px;top:4.500px" width="9" height="23" viewBox="0 0 9 23"><rect width="9" height="23" rx="2.500" fill="#eef0f4"/><path d="M2 7.800l2.500-3.800L7 7.800zM2 15.200l2.500 3.800L7 15.200z" fill="#3c4252"/></svg></div>
<div class="inp" style="left:610.5px;top:90px;width:80px"><span class="abs" style="left:0;width:64.6px;text-align:center">17</span><svg class="abs" style="right:5px;top:4.500px" width="9" height="23" viewBox="0 0 9 23"><rect width="9" height="23" rx="2.500" fill="#eef0f4"/><path d="M2 7.800l2.500-3.800L7 7.800zM2 15.200l2.500 3.800L7 15.200z" fill="#3c4252"/></svg></div>
<div class="inp" style="left:702.5px;top:90px;width:80px"><span class="abs" style="left:0;width:64.6px;text-align:center">420</span><svg class="abs" style="right:5px;top:4.500px" width="9" height="23" viewBox="0 0 9 23"><rect width="9" height="23" rx="2.500" fill="#eef0f4"/><path d="M2 7.800l2.500-3.800L7 7.800zM2 15.200l2.500 3.800L7 15.200z" fill="#3c4252"/></svg></div>
<div class="sepc" style="left:507.5px;top:90px">:</div>
<div class="sepc" style="left:599px;top:90px">:</div>
<div class="sepc" style="left:690.5px;top:90px">.</div>
<div class="clk" style="left:790px;top:90px"><svg class="abs" style="left:7.300px;top:8.800px" width="14" height="14" viewBox="0 0 13 13"><circle cx="6.500" cy="6.500" r="6.500" fill="#4257c9"/><path d="M6.500 3v3.800l2.400 1.500" fill="none" stroke="#fff" stroke-width="1.500" stroke-linecap="round"/></svg></div>
<div class="abs" style="left:18.5px;top:140px;width:803px;height:57px;border:1px solid #d9dde9;border-radius:5px;font-family:'Liberation Sans','Noto Sans CJK KR',sans-serif;font-size:14px;line-height:18px;color:#5f6880;padding:8px 10px">슈박스.<svg class="abs" style="right:2px;bottom:2px" width="8" height="8" viewBox="0 0 8 8"><path d="M7.500 1L1 7.500M7.500 4.500l-3 3" stroke="#8a8f9c" stroke-width="1"/></svg></div>
<div class="btn pri" style="left:17.5px;top:211.5px;width:185px;height:34.5px;line-height:34px;font-size:13.8px;font-weight:700;border-radius:4px">前へ</div>
<div class="btn pri" style="left:225px;top:211.5px;width:391px;height:34.5px;line-height:34px;font-size:13.8px;font-weight:700;border-radius:4px">更新</div>
<div class="btn pri" style="left:637px;top:211.5px;width:185px;height:34.5px;line-height:34px;font-size:13.8px;font-weight:700;border-radius:4px">次へ</div>
</div>
</div>
<div class="card" style="left:1007.500px;top:86.500px;width:900px;height:406px"><div class="hd" style="height:48.500px"><div class="tt blue" style="left:17.5px;top:13.500px;font-size:14.800px;line-height:21px">VOD字幕処理</div><svg class="abs" style="left:843.5px;top:20px" width="11" height="7" viewBox="0 0 11 7"><path d="M1 1l4.500 4.500L10 1" fill="none" stroke="#b4bbcd" stroke-width="1.500"/></svg></div>
<div class="card" style="left:17.5px;top:67.5px;width:843px;height:150px"><div class="hd" style="height:49px"><div class="tt blue" style="left:18px;top:12px;font-size:14.700px;line-height:21px">ソース言語の設定</div><svg class="abs" style="left:805px;top:20px" width="11" height="7" viewBox="0 0 11 7"><path d="M1 1l4.500 4.500L10 1" fill="none" stroke="#b4bbcd" stroke-width="1.500"/></svg></div>
<div class="lbl" style="left:26px;top:65px">ターゲットコンテンツ</div>
<div class="lbl" style="left:232px;top:65px">言語コードを選択</div>
<div class="lbl" style="left:440px;top:65px">保存</div>
<div class="lbl" style="left:645px;top:65px">字幕保存に失敗した場合</div>
<div class="abs" style="left:18px;top:89px;width:185px;height:34px;border:1px solid #dfe3ee;border-radius:4px;background:#e9ecf3;font-size:15.600px;letter-spacing:.45px;line-height:32px;color:#7a8298;padding-left:12px;overflow:hidden;white-space:nowrap">5d7800e7-57ab-4a52-b</div>
<div class="btn" style="left:225.5px;top:88.5px;width:184px;height:35px;line-height:35px;font-size:14px;border-radius:4.500px;background:#5ab1c6">選択 <span style="font-size:9px;vertical-align:1.500px">▼</span></div>
<div class="btn" style="left:431.5px;top:88.5px;width:184px;height:35px;line-height:35px;font-size:14px;border-radius:4.500px;background:#929fe2">保存</div>
<div class="btn" style="left:638px;top:88.5px;width:184px;height:35px;line-height:35px;font-size:14px;border-radius:4.500px;background:#b1b1b9">ヘルプ</div></div>
<div class="card" style="left:17.5px;top:241.5px;width:843px;height:48px;background:#f8f9fd"><div class="abs lblue" style="left:18px;top:12px;font-size:14.700px;line-height:21px;font-weight:700;white-space:nowrap">ソース言語を複数のターゲット言語に翻訳</div><svg class="abs" style="left:807px;top:18px" width="7" height="11" viewBox="0 0 7 11"><path d="M1 1l4.500 4.500L1 10" fill="none" stroke="#c6cbdb" stroke-width="1.500"/></svg></div>
<div class="card" style="left:17.5px;top:313.5px;width:843px;height:49px;background:#f8f9fd"><div class="abs lblue" style="left:18px;top:12.500px;font-size:14.700px;line-height:21px;font-weight:700;white-space:nowrap">最終字幕の編集</div><svg class="abs" style="left:807px;top:18px" width="7" height="11" viewBox="0 0 7 11"><path d="M1 1l4.500 4.500L1 10" fill="none" stroke="#c6cbdb" stroke-width="1.500"/></svg></div></div>
<div class="abs" style="left:995.500px;top:517px;width:5px;height:55px;background:#8f919b;border-radius:1px"></div>
<div class="card" style="left:1007.500px;top:514.500px;width:900px;height:520px"><div class="hd" style="height:54.500px"><div class="th" style="left:97.500px">開始時間</div><div class="th" style="left:244.500px">終了時間</div><div class="th" style="left:390.500px">字幕</div><div class="btn pri" style="left:755.500px;top:13.500px;width:112px;height:27px;line-height:29.500px;font-size:12.200px;letter-spacing:.1px;font-weight:700">Download File <span style="font-size:8.500px;vertical-align:1px">▼</span></div></div>
<div class="row" style="top:53.2px"><span class="n">1</span><span class="s">00:00:15.949</span><span class="e">00:00:17.420</span><span class="k"><b>슈박스</b></span><div class="ic" style="left:702.5px;border:1.300px solid #a6dfbb"><svg class="abs" style="left:6px;top:3px" width="9" height="15" viewBox="0 0 9 15"><path d="M4.500 1v4.800M4.500 9.200V14M2.500 3.200l2-2.200 2 2.200M2.500 11.800l2 2.200 2-2.200M3 7.500h3" fill="none" stroke="#6cc892" stroke-width="1.300"/></svg></div><div class="ic" style="left:740.5px;border:1.500px solid #8f9ce0"><svg class="abs" style="left:4.700px;top:4.700px" width="11" height="11" viewBox="0 0 11 11"><path d="M5.500 .5v10M.5 5.500h10" stroke="#4a5fd0" stroke-width="2.700" stroke-linecap="round"/></svg></div><div class="ic" style="left:777.5px;border:1.300px solid #f6dc9a;background:#fdf4da"><svg class="abs" style="left:3.800px;top:3.300px" width="13" height="14" viewBox="0 0 13 14"><path d="M4.500 0h4.300L12.500 3.600V10a1 1 0 0 1-1 1H4.500a1 1 0 0 1-1-1V1a1 1 0 0 1 1-1z" fill="#f3bb42"/><path d="M0 3.500a1 1 0 0 1 1-1h1.600v8.300a1.200 1.200 0 0 0 1.200 1.200H9V13a1 1 0 0 1-1 1H1a1 1 0 0 1-1-1z" fill="#f3bb42"/></svg></div><div class="tg" style="left:815.5px"></div></div>
<div class="row" style="top:106.2px"><span class="n">2</span><span class="s">00:01:05.110</span><span class="e">00:01:06.029</span><span class="k"><b>혼신을</b></span><div class="ic" style="left:702.5px;border:1.300px solid #a6dfbb"><svg class="abs" style="left:6px;top:3px" width="9" height="15" viewBox="0 0 9 15"><path d="M4.500 1v4.800M4.500 9.200V14M2.500 3.200l2-2.200 2 2.200M2.500 11.800l2 2.200 2-2.200M3 7.500h3" fill="none" stroke="#6cc892" stroke-width="1.300"/></svg></div><div class="ic" style="left:740.5px;border:1.500px solid #8f9ce0"><svg class="abs" style="left:4.700px;top:4.700px" width="11" height="11" viewBox="0 0 11 11"><path d="M5.500 .5v10M.5 5.500h10" stroke="#4a5fd0" stroke-width="2.700" stroke-linecap="round"/></svg></div><div class="ic" style="left:777.5px;border:1.300px solid #f6dc9a;background:#fdf4da"><svg class="abs" style="left:3.800px;top:3.300px" width="13" height="14" viewBox="0 0 13 14"><path d="M4.500 0h4.300L12.500 3.600V10a1 1 0 0 1-1 1H4.500a1 1 0 0 1-1-1V1a1 1 0 0 1 1-1z" fill="#f3bb42"/><path d="M0 3.500a1 1 0 0 1 1-1h1.600v8.300a1.200 1.200 0 0 0 1.200 1.200H9V13a1 1 0 0 1-1 1H1a1 1 0 0 1-1-1z" fill="#f3bb42"/></svg></div><div class="tg" style="left:815.5px"></div></div>
<div class="row" style="top:159.2px"><span class="n">3</span><span class="s">00:01:07.699</span><span class="e">00:01:08.080</span><span class="k"><b>일</b></span><div class="ic" style="left:702.5px;border:1.300px solid #a6dfbb"><svg class="abs" style="left:6px;top:3px" width="9" height="15" viewBox="0 0 9 15"><path d="M4.500 1v4.800M4.500 9.200V14M2.500 3.200l2-2.200 2 2.200M2.500 11.800l2 2.200 2-2.200M3 7.500h3" fill="none" stroke="#6cc892" stroke-width="1.300"/></svg></div><div class="ic" style="left:740.5px;border:1.500px solid #8f9ce0"><svg class="abs" style="left:4.700px;top:4.700px" width="11" height="11" viewBox="0 0 11 11"><path d="M5.500 .5v10M.5 5.500h10" stroke="#4a5fd0" stroke-width="2.700" stroke-linecap="round"/></svg></div><div class="ic" style="left:777.5px;border:1.300px solid #f6dc9a;background:#fdf4da"><svg class="abs" style="left:3.800px;top:3.300px" width="13" height="14" viewBox="0 0 13 14"><path d="M4.500 0h4.300L12.500 3.600V10a1 1 0 0 1-1 1H4.500a1 1 0 0 1-1-1V1a1 1 0 0 1 1-1z" fill="#f3bb42"/><path d="M0 3.500a1 1 0 0 1 1-1h1.600v8.300a1.200 1.200 0 0 0 1.200 1.200H9V13a1 1 0 0 1-1 1H1a1 1 0 0 1-1-1z" fill="#f3bb42"/></svg></div><div class="tg" style="left:815.5px"></div></div>
<div class="row" style="top:212.2px"><span class="n">4</span><span class="s">00:01:16.510</span><span class="e">00:01:17.400</span><span class="k"><b>생명을</b> 하고</span><div class="ic" style="left:702.5px;border:1.300px solid #a6dfbb"><svg class="abs" style="left:6px;top:3px" width="9" height="15" viewBox="0 0 9 15"><path d="M4.500 1v4.800M4.500 9.200V14M2.500 3.200l2-2.200 2 2.200M2.500 11.800l2 2.200 2-2.200M3 7.500h3" fill="none" stroke="#6cc892" stroke-width="1.300"/></svg></div><div class="ic" style="left:740.5px;border:1.500px solid #8f9ce0"><svg class="abs" style="left:4.700px;top:4.700px" width="11" height="11" viewBox="0 0 11 11"><path d="M5.500 .5v10M.5 5.500h10" stroke="#4a5fd0" stroke-width="2.700" stroke-linecap="round"/></svg></div><div class="ic" style="left:777.5px;border:1.300px solid #f6dc9a;background:#fdf4da"><svg class="abs" style="left:3.800px;top:3.300px" width="13" height="14" viewBox="0 0 13 14"><path d="M4.500 0h4.300L12.500 3.600V10a1 1 0 0 1-1 1H4.500a1 1 0 0 1-1-1V1a1 1 0 0 1 1-1z" fill="#f3bb42"/><path d="M0 3.500a1 1 0 0 1 1-1h1.600v8.300a1.200 1.200 0 0 0 1.200 1.200H9V13a1 1 0 0 1-1 1H1a1 1 0 0 1-1-1z" fill="#f3bb42"/></svg></div><div class="tg" style="left:815.5px"></div></div>
<div class="row" style="top:265.2px"><span class="n">5</span><span class="s">00:01:28.830</span><span class="e">00:01:29.620</span><span class="k"><b>어떤</b> <b>자손</b></span><div class="ic" style="left:702.5px;border:1.300px solid #a6dfbb"><svg class="abs" style="left:6px;top:3px" width="9" height="15" viewBox="0 0 9 15"><path d="M4.500 1v4.800M4.500 9.200V14M2.500 3.200l2-2.200 2 2.200M2.500 11.800l2 2.200 2-2.200M3 7.500h3" fill="none" stroke="#6cc892" stroke-width="1.300"/></svg></div><div class="ic" style="left:740.5px;border:1.500px solid #8f9ce0"><svg class="abs" style="left:4.700px;top:4.700px" width="11" height="11" viewBox="0 0 11 11"><path d="M5.500 .5v10M.5 5.500h10" stroke="#4a5fd0" stroke-width="2.700" stroke-linecap="round"/></svg></div><div class="ic" style="left:777.5px;border:1.300px solid #f6dc9a;background:#fdf4da"><svg class="abs" style="left:3.800px;top:3.300px" width="13" height="14" viewBox="0 0 13 14"><path d="M4.500 0h4.300L12.500 3.600V10a1 1 0 0 1-1 1H4.500a1 1 0 0 1-1-1V1a1 1 0 0 1 1-1z" fill="#f3bb42"/><path d="M0 3.500a1 1 0 0 1 1-1h1.600v8.300a1.200 1.200 0 0 0 1.200 1.200H9V13a1 1 0 0 1-1 1H1a1 1 0 0 1-1-1z" fill="#f3bb42"/></svg></div><div class="tg" style="left:815.5px"></div></div>
<div class="row" style="top:318.2px"><span class="n">6</span><span class="s">00:01:31.080</span><span class="e">00:01:31.690</span><span class="k"><b>효</b> 시고</span><div class="ic" style="left:702.5px;border:1.300px solid #a6dfbb"><svg class="abs" style="left:6px;top:3px" width="9" height="15" viewBox="0 0 9 15"><path d="M4.500 1v4.800M4.500 9.200V14M2.500 3.200l2-2.200 2 2.200M2.500 11.800l2 2.200 2-2.200M3 7.500h3" fill="none" stroke="#6cc892" stroke-width="1.300"/></svg></div><div class="ic" style="left:740.5px;border:1.500px solid #8f9ce0"><svg class="abs" style="left:4.700px;top:4.700px" width="11" height="11" viewBox="0 0 11 11"><path d="M5.500 .5v10M.5 5.500h10" stroke="#4a5fd0" stroke-width="2.700" stroke-linecap="round"/></svg></div><div class="ic" style="left:777.5px;border:1.300px solid #f6dc9a;background:#fdf4da"><svg class="abs" style="left:3.800px;top:3.300px" width="13" height="14" viewBox="0 0 13 14"><path d="M4.500 0h4.300L12.500 3.600V10a1 1 0 0 1-1 1H4.500a1 1 0 0 1-1-1V1a1 1 0 0 1 1-1z" fill="#f3bb42"/><path d="M0 3.500a1 1 0 0 1 1-1h1.600v8.300a1.200 1.200 0 0 0 1.200 1.200H9V13a1 1 0 0 1-1 1H1a1 1 0 0 1-1-1z" fill="#f3bb42"/></svg></div><div class="tg" style="left:815.5px"></div></div>
<div class="row" style="top:371.2px"><span class="n">7</span><span class="s">00:01:34.339</span><span class="e">00:01:34.889</span><span class="k"><b>씨</b></span><div class="ic" style="left:702.5px;border:1.300px solid #a6dfbb"><svg class="abs" style="left:6px;top:3px" width="9" height="15" viewBox="0 0 9 15"><path d="M4.500 1v4.800M4.500 9.200V14M2.500 3.200l2-2.200 2 2.200M2.500 11.800l2 2.200 2-2.200M3 7.500h3" fill="none" stroke="#6cc892" stroke-width="1.300"/></svg></div><div class="ic" style="left:740.5px;border:1.500px solid #8f9ce0"><svg class="abs" style="left:4.700px;top:4.700px" width="11" height="11" viewBox="0 0 11 11"><path d="M5.500 .5v10M.5 5.500h10" stroke="#4a5fd0" stroke-width="2.700" stroke-linecap="round"/></svg></div><div class="ic" style="left:777.5px;border:1.300px solid #f6dc9a;background:#fdf4da"><svg class="abs" style="left:3.800px;top:3.300px" width="13" height="14" viewBox="0 0 13 14"><path d="M4.500 0h4.300L12.500 3.600V10a1 1 0 0 1-1 1H4.500a1 1 0 0 1-1-1V1a1 1 0 0 1 1-1z" fill="#f3bb42"/><path d="M0 3.500a1 1 0 0 1 1-1h1.600v8.300a1.200 1.200 0 0 0 1.200 1.200H9V13a1 1 0 0 1-1 1H1a1 1 0 0 1-1-1z" fill="#f3bb42"/></svg></div><div class="tg" style="left:815.5px"></div></div>
<div class="row" style="top:424.2px"><span class="n">8</span><span class="s">00:01:37.410</span><span class="e">00:01:39.580</span><span class="k"><b>믿음</b></span><div class="ic" style="left:702.5px;border:1.300px solid #a6dfbb"><svg class="abs" style="left:6px;top:3px" width="9" height="15" viewBox="0 0 9 15"><path d="M4.500 1v4.800M4.500 9.200V14M2.500 3.200l2-2.200 2 2.200M2.500 11.800l2 2.200 2-2.200M3 7.500h3" fill="none" stroke="#6cc892" stroke-width="1.300"/></svg></div><div class="ic" style="left:740.5px;border:1.500px solid #8f9ce0"><svg class="abs" style="left:4.700px;top:4.700px" width="11" height="11" viewBox="0 0 11 11"><path d="M5.500 .5v10M.5 5.500h10" stroke="#4a5fd0" stroke-width="2.700" stroke-linecap="round"/></svg></div><div class="ic" style="left:777.5px;border:1.300px solid #f6dc9a;background:#fdf4da"><svg class="abs" style="left:3.800px;top:3.300px" width="13" height="14" viewBox="0 0 13 14"><path d="M4.500 0h4.300L12.500 3.600V10a1 1 0 0 1-1 1H4.500a1 1 0 0 1-1-1V1a1 1 0 0 1 1-1z" fill="#f3bb42"/><path d="M0 3.500a1 1 0 0 1 1-1h1.600v8.300a1.200 1.200 0 0 0 1.200 1.200H9V13a1 1 0 0 1-1 1H1a1 1 0 0 1-1-1z" fill="#f3bb42"/></svg></div><div class="tg" style="left:815.5px"></div></div>
<div class="row" style="top:477.2px"><span class="n">9</span><span class="s">00:01:40.120</span><span class="e">00:01:41.900</span><span class="k"><b>사랑</b></span><div class="ic" style="left:702.5px;border:1.300px solid #a6dfbb"><svg class="abs" style="left:6px;top:3px" width="9" height="15" viewBox="0 0 9 15"><path d="M4.500 1v4.800M4.500 9.200V14M2.500 3.200l2-2.200 2 2.200M2.500 11.800l2 2.200 2-2.200M3 7.500h3" fill="none" stroke="#6cc892" stroke-width="1.300"/></svg></div><div class="ic" style="left:740.5px;border:1.500px solid #8f9ce0"><svg class="abs" style="left:4.700px;top:4.700px" width="11" height="11" viewBox="0 0 11 11"><path d="M5.500 .5v10M.5 5.500h10" stroke="#4a5fd0" stroke-width="2.700" stroke-linecap="round"/></svg></div><div class="ic" style="left:777.5px;border:1.300px solid #f6dc9a;background:#fdf4da"><svg class="abs" style="left:3.800px;top:3.300px" width="13" height="14" viewBox="0 0 13 14"><path d="M4.500 0h4.300L12.500 3.600V10a1 1 0 0 1-1 1H4.500a1 1 0 0 1-1-1V1a1 1 0 0 1 1-1z" fill="#f3bb42"/><path d="M0 3.500a1 1 0 0 1 1-1h1.600v8.300a1.200 1.200 0 0 0 1.200 1.200H9V13a1 1 0 0 1-1 1H1a1 1 0 0 1-1-1z" fill="#f3bb42"/></svg></div><div class="tg" style="left:815.5px"></div></div></div>
<div class="abs" style="left:455px;top:1006px;width:1500px;height:20px;background:#888;box-shadow:0 0 26px 6px rgba(95,97,110,.5)"></div>
</div>
</body>
</html>
